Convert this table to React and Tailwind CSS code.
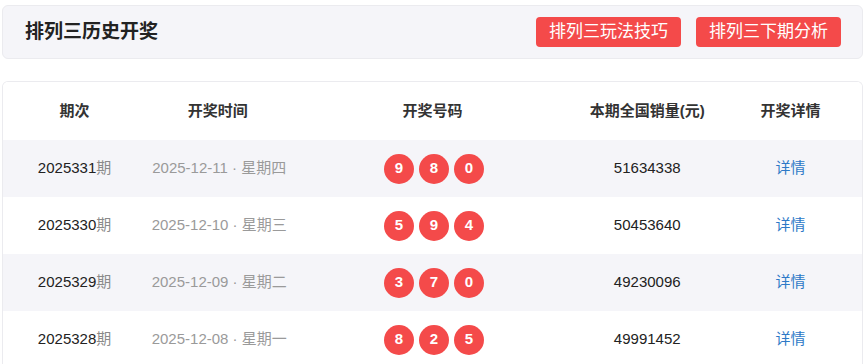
const rows = [
  { no: "2025331", date: "2025-12-11", week: "星期四", balls: [9, 8, 0], sales: "51634338" },
  { no: "2025330", date: "2025-12-10", week: "星期三", balls: [5, 9, 4], sales: "50453640" },
  { no: "2025329", date: "2025-12-09", week: "星期二", balls: [3, 7, 0], sales: "49230096" },
  { no: "2025328", date: "2025-12-08", week: "星期一", balls: [8, 2, 5], sales: "49991452" },
];

const font = { fontFamily: '"Liberation Sans", "Noto Sans CJK SC", sans-serif' };

export default function App() {
  return (
    <div className="min-h-screen bg-white px-[2px] pt-[5px]" style={font}>
      <div className="flex h-[54px] items-center justify-between rounded-md border border-[#ebebef] bg-[#f5f5f9] pl-[22px] pr-[21px]">
        <h1 className="text-[19px] font-bold text-[#222]">排列三历史开奖</h1>
        <div className="flex gap-[15px]">
          <button className="h-[30px] w-[145px] rounded-[4px] bg-[#f44a4a] text-[17px] text-white">排列三玩法技巧</button>
          <button className="h-[30px] w-[145px] rounded-[4px] bg-[#f44a4a] text-[17px] text-white">排列三下期分析</button>
        </div>
      </div>

      <div className="mt-[22px] overflow-hidden rounded-t-md border border-b-0 border-[#ebebef]">
        <div className="grid h-[58px] grid-cols-[1fr_1fr_2fr_1fr_1fr] items-center bg-white text-center text-[15px] font-bold text-[#333]">
          <div>期次</div>
          <div>开奖时间</div>
          <div>开奖号码</div>
          <div>本期全国销量(元)</div>
          <div>开奖详情</div>
        </div>
        {rows.map((r, i) => (
          <div
            key={r.no}
            className={`grid h-[57px] grid-cols-[1fr_1fr_2fr_1fr_1fr] items-center text-center text-[15px] ${i % 2 === 0 ? "bg-[#f5f5f9]" : "bg-white"}`}
          >
            <div className="text-[#222]">
              {r.no}
              <span className="text-[#8a8a8a]">期</span>
            </div>
            <div className="pl-[3px] text-[#9a9a9a]">
              {r.date} · {r.week}
            </div>
            <div className="flex justify-center gap-[5px] pl-[3px]">
              {r.balls.map((b, j) => (
                <span
                  key={j}
                  className="flex h-[30px] w-[30px] items-center justify-center rounded-full bg-[#f44a4a] text-[15px] font-bold text-white"
                >
                  {b}
                </span>
              ))}
            </div>
            <div className="text-[#222]">{r.sales}</div>
            <div>
              <a className="text-[#2d79c7]">详情</a>
            </div>
          </div>
        ))}
      </div>
    </div>
  );
}
